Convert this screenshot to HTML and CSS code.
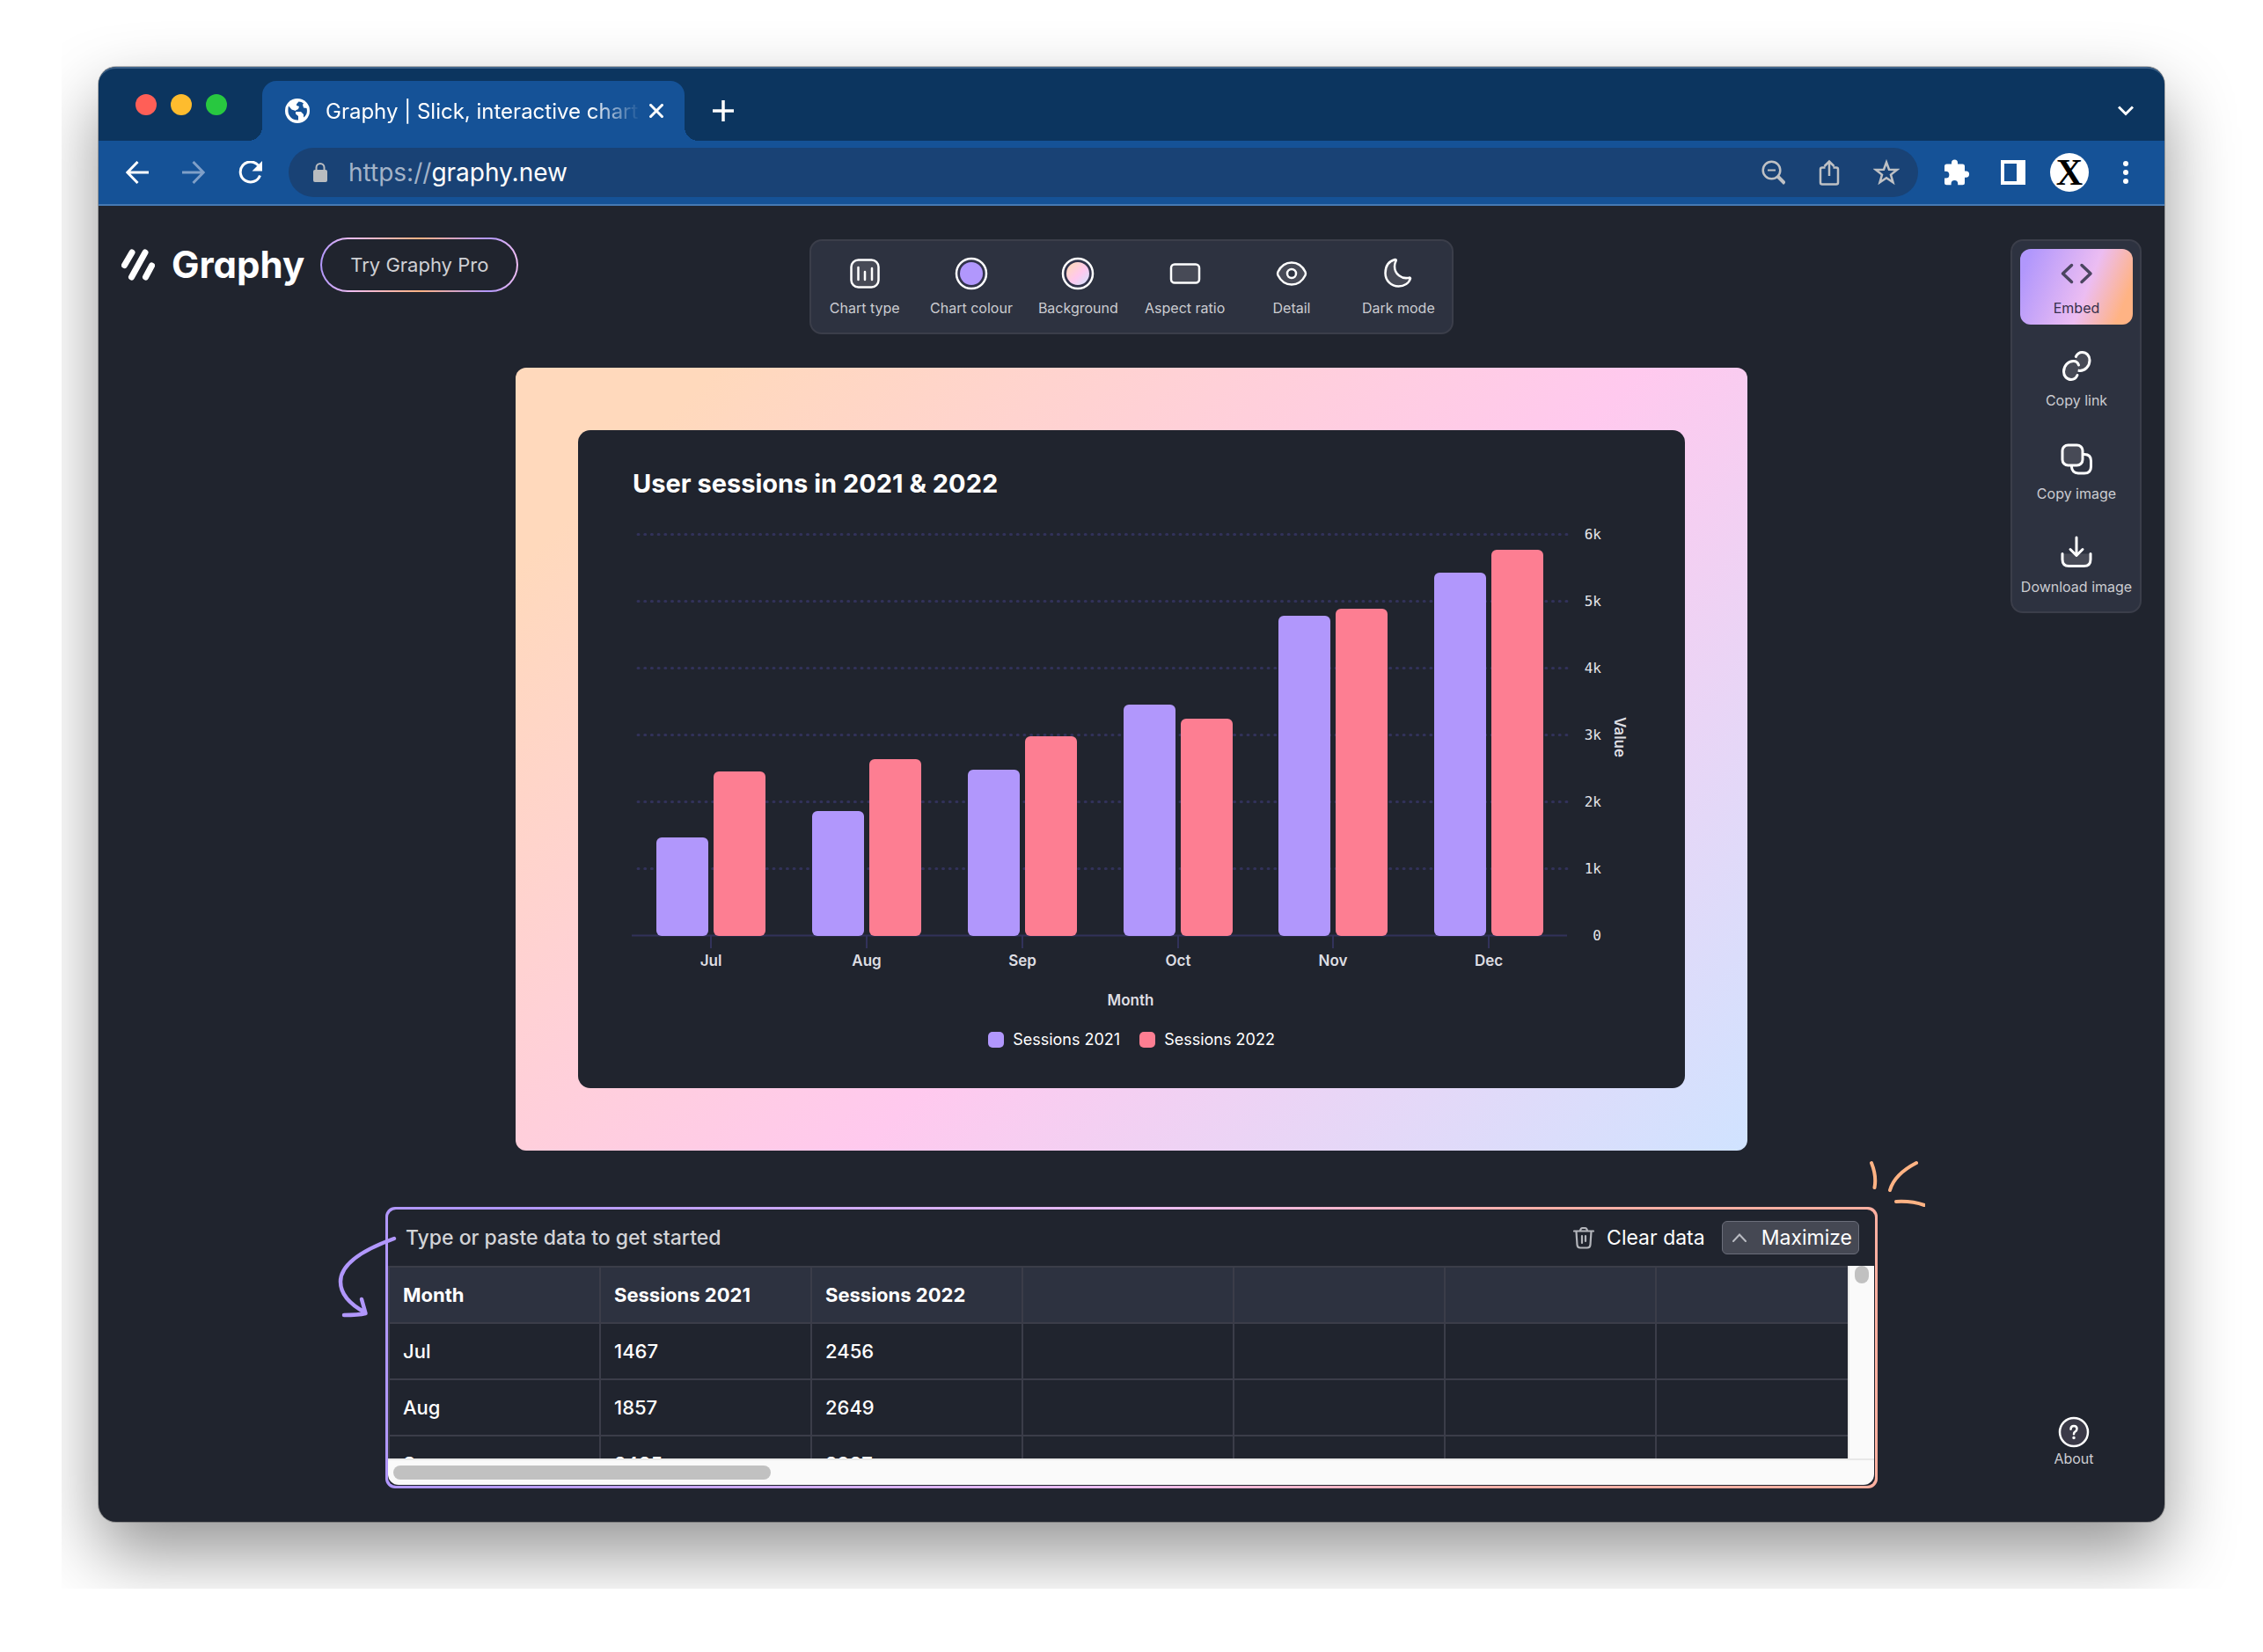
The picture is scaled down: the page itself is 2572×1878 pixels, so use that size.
FILE: index.html
```html
<!DOCTYPE html>
<html lang="en">
<head>
<meta charset="utf-8">
<title>Graphy | Slick, interactive charts</title>
<link rel="stylesheet" href="styles.css">
</head>
<body>
<div class="stage">
<div class="window">
  <header class="tabstrip">
    <div class="lights"><span class="light red"></span><span class="light amber"></span><span class="light green"></span></div>
    <div class="tab">
      <svg class="favicon" viewBox="0 0 28 28" width="28" height="28"><circle cx="14" cy="14" r="14" fill="#fff"/><path d="M4 8.5l3.500 4 4.500 1.500v3.500l3 2.500v4.500c-6 .6-11-4-11.500-9.500-.1-2.500 0-4.500.5-6.500zM15.500 3.500c-1.500 2-3 2.500-2.500 4.500l3 1-1 3-3 1.500v1.500h6l3 3v3.500c4-2.500 4.500-7 3.500-10.500l-3.500-.5-1-3.500 1-1.500c-1.500-1.200-3.500-2-5.500-2z" fill="#155297"/></svg>
      <span class="tab-title">Graphy | Slick, interactive charts</span>
      <button class="plain" aria-label="Close tab"><svg viewBox="0 0 16 16" width="16" height="16" stroke="#fff" stroke-width="3" fill="none"><path d="M0.500 0.500l15 15M15.500 0.500l-15 15"/></svg></button>
    </div>
    <button class="plain new-tab" aria-label="New tab"><svg viewBox="0 0 24 24" width="24" height="24" stroke="#fff" stroke-width="3.500" fill="none"><path d="M12 0v24M0 12h24"/></svg></button>
    <button class="plain tab-menu" aria-label="Search tabs"><svg viewBox="0 0 18 12" width="18" height="12" stroke="#fff" stroke-width="3" fill="none"><path d="M1 1.500l8 8 8-8"/></svg></button>
  </header>

  <nav class="navbar" aria-label="Browser">
    <div class="nav-buttons">
      <button class="plain" aria-label="Back"><svg viewBox="0 0 26 26" width="26" height="26" stroke="#fff" stroke-width="3" fill="none"><path d="M26 13H2M13.500 1L1.800 13l11.700 12"/></svg></button>
      <button class="plain" aria-label="Forward"><svg viewBox="0 0 26 26" width="26" height="26" stroke="#7f9fc8" stroke-width="3" fill="none"><path d="M0 13h24M12.500 1l11.700 12-11.700 12"/></svg></button>
      <button class="plain" aria-label="Reload"><svg viewBox="0 0 28 26" width="28" height="26"><path d="M22.500 5A11.500 11.500 0 1 0 24.500 16.500" stroke="#fff" stroke-width="3" fill="none"/><path d="M27 0v11.500H15.500z" fill="#fff"/></svg></button>
    </div>
    <div class="address">
      <svg viewBox="0 0 16 22" width="16" height="22"><rect y="8" width="16" height="14" rx="2" fill="#b9bcc0"/><path d="M3.500 9V5.500a4.500 4.500 0 0 1 9 0V9" stroke="#b9bcc0" stroke-width="2" fill="none"/></svg>
      <span class="url">https://<b>graphy.new</b></span>
      <button class="plain" aria-label="Zoom"><svg viewBox="0 0 28 30" width="28" height="30" stroke="#bfc1c4" fill="none"><circle cx="12.500" cy="12.500" r="9.800" stroke-width="2.500"/><path d="M8 12.500h9" stroke-width="2"/><path d="M19.500 19.500l8 8" stroke-width="4"/></svg></button>
      <button class="plain" aria-label="Share"><svg viewBox="0 0 28 30" width="28" height="30" stroke="#bfc1c4" stroke-width="2.500" fill="none"><path d="M9.500 9.500H6a2 2 0 0 0-2 2v15a2 2 0 0 0 2 2h16a2 2 0 0 0 2-2v-15a2 2 0 0 0-2-2h-3.500M14 19V2.500M8.500 8L14 2.500 19.500 8"/></svg></button>
      <button class="plain" aria-label="Bookmark"><svg viewBox="0 0 30 30" width="30" height="30" stroke="#bfc1c4" stroke-width="2.500" fill="none"><path d="M15 3.500l3 8.200 9 .3-7 5.600 2.500 8.700-7.500-5-7.500 5L10 17.600 3 12l9-.3z"/></svg></button>
    </div>
    <div class="nav-end">
      <button class="plain" aria-label="Extensions"><svg viewBox="0 0 30 30" width="30" height="30" fill="#fff"><path d="M1 8a2.500 2.500 0 0 1 2.500-2.500H9V4a3.500 3.500 0 0 1 7 0v1.500h5.500A2.500 2.500 0 0 1 24 8v5.500h1.500a3.600 3.600 0 0 1 0 7.200H24v6a2.500 2.500 0 0 1-2.500 2.500h-5.300v-1.500a3.800 3.800 0 0 0-7.600 0v1.500H3.500A2.500 2.500 0 0 1 1 26.700v-5.200h1.500a3.800 3.800 0 0 0 0-7.700H1z"/></svg></button>
      <button class="plain" aria-label="Side panel"><svg viewBox="0 0 28 28" width="28" height="28"><path d="M0 0h28v28H0zM4 4v20h14V4z" fill="#fff" fill-rule="evenodd"/></svg></button>
      <button class="plain avatar" aria-label="Profile">X</button>
      <button class="plain" aria-label="Menu"><svg viewBox="0 0 6 28" width="6" height="28" fill="#fff"><circle cx="3" cy="4" r="3"/><circle cx="3" cy="14" r="3"/><circle cx="3" cy="24" r="3"/></svg></button>
    </div>
  </nav>

  <main class="app">
    <div class="brand">
      <svg viewBox="0 0 38 36" width="38" height="36" stroke="#fff" stroke-width="7" stroke-linecap="round"><path d="M3.500 18.500L12 4M11.500 32L27 4M27.500 32l7-13"/></svg>
      <span class="wordmark">Graphy</span>
      <button class="pro">Try Graphy Pro</button>
    </div>

    <div class="toolbar" role="toolbar" aria-label="Chart options">
      <button class="tool"><svg viewBox="0 0 38 38" width="38" height="38" stroke="#fff" stroke-linecap="round"><rect x="3.500" y="3.500" width="31" height="31" rx="8" fill="#474a56" stroke-width="2.500"/><path d="M11.500 12v14M19 17v9M27 13v13" stroke-width="2.500"/></svg>Chart type</button>
      <button class="tool"><svg viewBox="0 0 38 38" width="38" height="38"><circle cx="19" cy="19" r="17" fill="#31334a" stroke="#fff" stroke-width="2.500"/><circle cx="19" cy="19" r="13" fill="#b197fc"/></svg>Chart colour</button>
      <button class="tool"><svg viewBox="0 0 38 38" width="38" height="38"><defs><linearGradient id="peach" x1="0" y1="0" x2="1" y2="1"><stop offset="0.100" stop-color="#ffd9bc"/><stop offset="0.550" stop-color="#ffc8ee"/><stop offset="1" stop-color="#cfe4ff"/></linearGradient></defs><circle cx="19" cy="19" r="17" fill="#31334a" stroke="#fff" stroke-width="2.500"/><circle cx="19" cy="19" r="13" fill="url(#peach)"/></svg>Background</button>
      <button class="tool"><svg viewBox="0 0 38 38" width="38" height="38"><rect x="3" y="8.500" width="32" height="21" rx="4" fill="#474a56" stroke="#fff" stroke-width="2.500"/></svg>Aspect ratio</button>
      <button class="tool"><svg viewBox="0 0 38 38" width="38" height="38" stroke="#fff" stroke-width="2.500"><path d="M3.500 17C7 10 12.500 6.500 19 6.500S31 10 34.500 17q1 2 0 4C31 28 25.500 31.500 19 31.500S7 28 3.500 21q-1-2 0-4z" fill="#474a56"/><circle cx="19" cy="19" r="5" fill="#2d3240"/></svg>Detail</button>
      <button class="tool"><svg viewBox="0 0 38 38" width="38" height="38"><path d="M15.500 3C8 5 4.500 11 4.500 18.500 4.500 27 11 33.500 19.500 33.500c6.500 0 12-3.500 13.500-9-.3-.8-1-1-1.500-.8-8.500 2-16.500-4-16.500-13 0-2.500.7-4.500 1.700-6.500.2-.8-.4-1.400-1.200-1.200z" fill="#474a56" stroke="#fff" stroke-width="2.500" stroke-linejoin="round"/></svg>Dark mode</button>
    </div>

    <aside class="side">
      <div class="actions">
        <button class="tool embed"><svg viewBox="0 0 38 38" width="38" height="38" stroke="#4b4560" stroke-width="3.500" fill="none" stroke-linecap="round" stroke-linejoin="round"><path d="M13.500 9.500L3.500 19l10 9.500M25 9.500L35 19l-10 9.500"/></svg>Embed</button>
        <button class="tool"><svg viewBox="0 0 38 38" width="38" height="38" stroke="#fff" stroke-width="3" stroke-linecap="round"><g fill="#474a56"><path d="M18.300 8.500C20 5 22.500 3.500 25.500 3.500c5 0 8.500 4 8.500 9 0 7-5.500 12-11 12-3 0-5-1.500-6-4.500"/><path d="M21.500 18c-1-3-3-4.500-6-4.500-6 0-11 5.500-11 12 0 5 3.500 9 8.500 9 3 0 5.500-1.500 7-5"/></g></svg>Copy link</button>
        <button class="tool"><svg viewBox="0 0 38 38" width="38" height="38" stroke="#fff" stroke-width="3"><path d="M27 13.500h1q7.500 0 7.500 7.500v6.500q0 7.500-7.500 7.500H21q-7-.5-7.500-7V26" fill="none"/><rect x="3" y="3" width="23" height="23" rx="6.500" fill="#474a56"/></svg>Copy image</button>
        <button class="tool"><svg viewBox="0 0 38 38" width="38" height="38" stroke="#fff" stroke-width="3" stroke-linecap="round" stroke-linejoin="round"><path d="M3 20.500h32V27q0 7.500-7.500 7.500h-17Q3 34.500 3 27z" fill="#474a56" stroke="none"/><path d="M3 20.500V27q0 7.500 7.500 7.500h17Q35 34.500 35 27v-6.500M19 2v20M12 15.500l7 7 7-7" fill="none"/></svg>Download image</button>
      </div>
      <button class="tool about"><svg viewBox="0 0 36 36" width="36" height="36" fill="none" stroke="#fff" stroke-linecap="round"><circle cx="18" cy="18" r="16" fill="#3b3a48" stroke-width="2.500"/><path d="M14.500 14.800q0-3.800 3.500-3.800t3.500 3.300q0 2-2 3.200-1.500 1-1.500 2.700" stroke-width="2.500"/><circle cx="18" cy="24.500" r="1" fill="#fff" stroke-width="1.500"/></svg>About</button>
    </aside>

    <section class="frame">
      <div class="card">
        <h1 class="chart-title">User sessions in 2021 &amp; 2022</h1>
        <svg class="chart" viewBox="0 0 1258 574" role="img" aria-label="Bar chart of sessions by month">
          <g class="grid">
            <path d="M68 27.500H1125M68 103.500H1125M68 179.500H1125M68 255.500H1125M68 331.500H1125M68 407.500H1125"/>
          </g>
          <g class="axis">
            <path d="M61 483.500H1124M151 484v14M328 484v14M505 484v14M682 484v14M858 484v14M1035 484v14"/>
          </g>
          <g class="s2021">
            <rect x="89" y="372" width="59" height="112" rx="6"/><rect x="266" y="342" width="59" height="142" rx="6"/><rect x="443" y="295" width="59" height="189" rx="6"/><rect x="620" y="221" width="59" height="263" rx="6"/><rect x="796" y="120" width="59" height="364" rx="6"/><rect x="973" y="71" width="59" height="413" rx="6"/>
          </g>
          <g class="s2022">
            <rect x="154" y="297" width="59" height="187" rx="6"/><rect x="331" y="283" width="59" height="201" rx="6"/><rect x="508" y="257" width="59" height="227" rx="6"/><rect x="685" y="237" width="59" height="247" rx="6"/><rect x="861" y="112" width="59" height="372" rx="6"/><rect x="1038" y="45" width="59" height="439" rx="6"/>
          </g>
          <g class="y-labels">
            <text x="1163" y="33">6k</text><text x="1163" y="109">5k</text><text x="1163" y="185">4k</text><text x="1163" y="261">3k</text><text x="1163" y="337">2k</text><text x="1163" y="413">1k</text><text x="1163" y="489">0</text>
          </g>
          <g class="x-labels">
            <text x="151" y="518">Jul</text><text x="328" y="518">Aug</text><text x="505" y="518">Sep</text><text x="682" y="518">Oct</text><text x="858" y="518">Nov</text><text x="1035" y="518">Dec</text>
            <text x="628" y="563">Month</text>
            <text transform="translate(1178 258) rotate(90)">Value</text>
          </g>
        </svg>
        <ul class="legend">
          <li><span class="swatch violet"></span>Sessions 2021</li>
          <li><span class="swatch coral"></span>Sessions 2022</li>
        </ul>
      </div>
    </section>

    <section class="data">
      <div class="data-inner">
        <div class="data-head">
          <h2>Type or paste data to get started</h2>
          <button class="plain clear"><svg viewBox="0 0 24 26" width="24" height="26" stroke="#b3b5bb" stroke-width="2.200" fill="none" stroke-linecap="round" stroke-linejoin="round"><path d="M1 5.500h22M3.500 6l1 15q.3 3.500 3.500 3.500h8q3.200 0 3.500-3.500l1-15M8 5q.5-3 2.500-3h3q2 0 2.500 3M10 11v8M14 11v6"/></svg>Clear data</button>
          <button class="plain maximize"><svg viewBox="0 0 16 10" width="16" height="10" stroke="#b9bbc2" stroke-width="2" fill="none" stroke-linecap="round"><path d="M1 9l7-7.500L15 9"/></svg>Maximize</button>
        </div>
        <div class="sheet">
          <div class="cells">
            <table>
              <thead><tr><th>Month</th><th>Sessions 2021</th><th>Sessions 2022</th><th></th><th></th><th></th><th></th></tr></thead>
              <tbody>
                <tr><td>Jul</td><td>1467</td><td>2456</td><td></td><td></td><td></td><td></td></tr>
                <tr><td>Aug</td><td>1857</td><td>2649</td><td></td><td></td><td></td><td></td></tr>
                <tr><td>Sep</td><td>2485</td><td>2987</td><td></td><td></td><td></td><td></td></tr>
              </tbody>
            </table>
          </div>
          <div class="track-y"><span class="thumb"></span></div>
          <div class="track-x"><span class="thumb"></span></div>
        </div>
      </div>
      <svg class="doodle arrow" viewBox="0 0 70 96" width="70" height="96" fill="none" stroke="#b197fc" stroke-width="4.500" stroke-linecap="round" stroke-linejoin="round"><path d="M66 5Q5 27 5 54q0 20 28 35M29 74l4.500 16q-8 2-24.500 2"/></svg>
      <svg class="doodle spark" viewBox="0 0 64 56" width="64" height="56" fill="none" stroke="#ffb384" stroke-width="4" stroke-linecap="round"><path d="M3 4q6 15 3.500 28M54 4Q29 17 24 35M31 48q18-1 32 4"/></svg>
    </section>
  </main>
</div>
</div>
</body>
</html>
```
FILE: styles.css
```css
* { box-sizing: border-box; }

body {
  margin: 0;
  background: #fff;
  color: #fff;
  font-family: Inter, "Liberation Sans", sans-serif;
  font-size: 22px;
}

button { font: inherit; color: inherit; }
svg { display: block; flex: none; }

.plain {
  display: flex;
  align-items: center;
  padding: 0;
  border: 0;
  background: none;
}

/* Desktop area that clips the window shadow */
.stage {
  margin-left: 70px;
  padding: 76px 112px 76px 42px;
  overflow: hidden;
}

.window {
  border-radius: 20px;
  background: #20242e;
  box-shadow: 0 0 0 1px rgba(0, 0, 0, .25), 0 36px 80px rgba(0, 0, 0, .42);
}

/* Tab strip */
.tabstrip {
  display: flex;
  align-items: center;
  height: 84px;
  padding: 14px 35px 0 42px;
  border-top: 2px solid #3d6289;
  border-radius: 20px 20px 0 0;
  background: #0c355f;
}

.lights { display: flex; gap: 16px; width: 144px; padding-bottom: 14px; }
.light { width: 24px; height: 24px; border-radius: 50%; }
.red { background: #ff5f57; }
.amber { background: #febc2e; }
.green { background: #28c840; }

.tab {
  position: relative;
  display: flex;
  align-items: center;
  gap: 18px;
  width: 480px;
  height: 68px;
  padding: 0 24px 0 26px;
  border-radius: 16px 16px 0 0;
  background: #155297;
}

.tab::before,
.tab::after {
  content: "";
  position: absolute;
  bottom: 0;
  width: 16px;
  height: 16px;
}
.tab::before { left: -16px; background: radial-gradient(circle at 0 0, transparent 16px, #155297 16px); }
.tab::after { right: -16px; background: radial-gradient(circle at 100% 0, transparent 16px, #155297 16px); }

.tab-title {
  flex: 1;
  margin-right: -8px;
  overflow: hidden;
  white-space: nowrap;
  font-size: 24px;
  -webkit-mask-image: linear-gradient(90deg, #000 84%, transparent);
  mask-image: linear-gradient(90deg, #000 84%, transparent);
}

.new-tab { margin-left: 32px; }
.tab-menu { margin-left: auto; }

/* Navigation bar */
.navbar {
  display: flex;
  align-items: center;
  height: 74px;
  padding-right: 41px;
  border-bottom: 2px solid #4679b4;
  background: #155297;
}

.nav-buttons { display: flex; gap: 38px; width: 216px; padding-left: 31px; }

.address {
  display: flex;
  flex: 1;
  align-items: center;
  gap: 36px;
  height: 56px;
  padding: 0 21px 0 28px;
  border-radius: 28px;
  background: #194275;
}

.url { flex: 1; margin-left: -12px; color: #a3b3c8; font-size: 28px; }
.url b { color: #fff; font-weight: 400; }

.nav-end { display: flex; align-items: center; gap: 35px; padding-left: 29px; }

.avatar {
  justify-content: center;
  width: 44px;
  height: 44px;
  margin: 0 4px 0 -7px;
  border-radius: 50%;
  background: #fff;
  color: #000;
  font: bold 42px/44px "Liberation Serif", serif;
}

/* App area: the tool palette sits over the middle column, the side panel spans all rows */
.app {
  display: grid;
  grid-template-columns: 1fr auto 1fr;
  grid-template-rows: auto auto auto;
  justify-items: center;
  padding: 38px 26px;
}

.brand {
  grid-area: 1 / 1;
  justify-self: start;
  display: flex;
  align-items: center;
  height: 58px;
}

.wordmark {
  margin: 0 18px 0 19px;
  font-size: 42px;
  font-weight: 700;
  line-height: 58px;
  font-feature-settings: "cv11";
}

.pro {
  height: 62px;
  padding: 0 32px;
  border: 2px solid transparent;
  border-radius: 31px;
  background:
    linear-gradient(#20242e, #20242e) padding-box,
    linear-gradient(90deg, #b197fc, #efbdf2 15%, #ffb384 50%, #b197fc 85%, #efbdf2) border-box;
  color: #cfd0d4;
}

.toolbar {
  grid-area: 1 / 2;
  display: flex;
  width: 732px;
  height: 108px;
  border: 2px solid #3b3e4a;
  border-radius: 14px;
  background: #2d3240;
}

.tool {
  display: flex;
  flex-direction: column;
  align-items: center;
  gap: 10px;
  height: 106px;
  padding: 18px 0 0;
  border: 0;
  background: none;
  color: #cbccd1;
  font-size: 16px;
  line-height: 20px;
  white-space: nowrap;
}

.toolbar .tool { flex: 1; }

.side {
  grid-area: 1 / 3 / 4 / 4;
  justify-self: end;
  display: flex;
  flex-direction: column;
  justify-content: space-between;
}

.actions {
  display: flex;
  flex-direction: column;
  padding: 9px 8px 0 9px;
  border: 2px solid #3b3e4a;
  border-radius: 14px;
  background: #2d3240;
}

.actions .tool { width: 128px; padding-top: 17px; }
.actions .tool:last-child { height: 103px; }

.actions .embed {
  height: 86px;
  margin-bottom: 11px;
  padding-top: 9px;
  border-radius: 12px;
  background: linear-gradient(112deg, #b197fc 8%, #ecbdf2 58%, #ffb384 88%);
  color: #35304c;
}

.about {
  gap: 2px;
  height: auto;
  padding: 0 5px 24px 0;
  align-self: center;
}

/* Chart */
.frame {
  grid-area: 2 / 1 / 3 / 4;
  width: 100%;
  max-width: 1400px;
  margin-top: 38px;
  padding: 71px;
  border-radius: 12px;
  background: linear-gradient(135deg, #ffd9bc 10%, #ffc9ee 56%, #d0e3ff);
}

.card {
  padding: 41px 0 36px;
  border-radius: 14px;
  background: #20242e;
}

.chart-title {
  margin: 0 62px;
  font-size: 29px;
  font-weight: 700;
  line-height: 40px;
}

.chart { width: 100%; margin-top: 10px; }
.grid path { stroke: #32325a; stroke-width: 3; stroke-linecap: round; stroke-dasharray: 1 6.700; }
.axis path { stroke: #32325a; stroke-width: 2; fill: none; }
.s2021 { fill: #b197fc; }
.s2022 { fill: #fd7e92; }
.y-labels { fill: #e6e6ea; font: 500 16px "DejaVu Sans Mono", monospace; text-anchor: end; }
.x-labels { fill: #dedee3; font-size: 17px; font-weight: 600; text-anchor: middle; }

.legend {
  display: flex;
  justify-content: center;
  gap: 22px;
  margin: 9px 0 0;
  padding: 0;
  list-style: none;
  font-size: 18px;
  line-height: 38px;
}
.legend li { display: flex; align-items: center; gap: 10px; }
.swatch { width: 18px; height: 18px; border-radius: 5px; }
.violet { background: #b197fc; }
.coral { background: #fd7e92; }

/* Data sheet */
.data {
  grid-area: 3 / 1 / 4 / 4;
  position: relative;
  width: 100%;
  max-width: 1696px;
  margin-top: 64px;
  padding: 3px;
  border-radius: 11px;
  background: linear-gradient(100deg, #b197fc 8%, #ecbdf2 50%, #ffb0a8 75%, #ffb0a0);
}

.data-inner {
  padding: 0 1px 1px 0;
  border-radius: 9px;
  background: #20242e;
}

.data-head {
  display: flex;
  align-items: center;
  height: 64px;
  padding: 0 17px 0 20px;
  font-size: 23px;
}
.data-head h2 { flex: 1; margin: 0; color: #d2d3d7; font-size: 23px; font-weight: 500; }
.clear { gap: 14px; margin-right: 19px; }
.maximize {
  gap: 17px;
  height: 38px;
  padding: 0 7px 0 11px;
  border: 1px solid #6b6e7a;
  border-radius: 6px;
  background: #454853;
}

.sheet {
  display: grid;
  grid-template-columns: minmax(0, 1fr) 30px;
  grid-template-rows: 219px 30px;
  overflow: hidden;
  border-radius: 0 0 12px 12px;
}

.cells { overflow: hidden; }

table {
  width: 1681px;
  table-layout: fixed;
  border-collapse: collapse;
}
th, td {
  width: 240px;
  height: 64px;
  padding: 0 15px;
  border: 2px solid #3b3d49;
  text-align: left;
  font-weight: 500;
}
th { background: #2d3240; font-weight: 700; }

.track-y {
  display: flex;
  justify-content: center;
  border-left: 2px solid #e8e8e8;
  background: #fafafa;
}
.track-y .thumb { width: 16px; height: 20px; border-radius: 8px; background: #c1c1c1; }
.track-x {
  grid-column: 1 / 3;
  display: flex;
  padding: 6px;
  border-top: 2px solid #e8e8e8;
  background: #fafafa;
}
.track-x .thumb { width: 429px; height: 16px; border-radius: 8px; background: #c1c1c1; }

.doodle { position: absolute; }
.arrow { top: 31px; left: -56px; }
.spark { top: -54px; right: -54px; }
```
